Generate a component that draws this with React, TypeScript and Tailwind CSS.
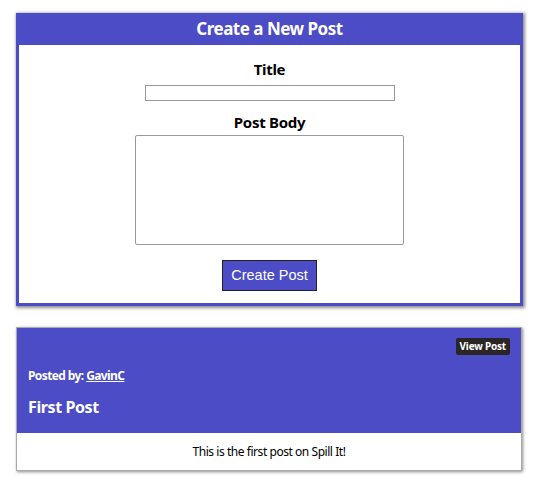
export default function App() {
  const font = { fontFamily: '"Noto Sans", "Open Sans", sans-serif' }
  return (
    <div className="min-h-[479px] bg-white pt-[13px] pl-4" style={font}>
      {/* New post form */}
      <div className="w-[507px] border-[3px] border-[#4b4cc6] bg-white shadow-[1px_1px_3px_1px_rgba(0,0,0,0.45)]">
        <div className="flex h-[29px] items-start justify-center bg-[#4b4cc6]">
          <h2 className="text-[17px] font-bold leading-[26px] tracking-[-0.5px] text-white">
            Create a New Post
          </h2>
        </div>
        <form className="flex flex-col items-center pb-[12px] pt-[14px]">
          <label className="text-[15px] font-bold leading-[20px] tracking-[-0.3px] text-black">Title</label>
          <input
            type="text"
            className="mt-[6px] h-[16px] w-[250px] border border-[#999] outline-none"
          />
          <label className="mt-[11px] text-[15px] font-bold leading-[20px] tracking-[-0.3px] text-black">
            Post Body
          </label>
          <textarea className="mt-[3px] h-[110px] w-[269px] resize-none rounded-[2px] border border-[#999] outline-none" />
          <button
            type="button"
            className="mt-[15px] h-[31px] w-[95px] border border-[#222] bg-[#4b4cc6] text-[14.5px] text-white"
            style={{ fontFamily: '"Liberation Sans", Arial, sans-serif' }}
          >
            Create Post
          </button>
        </form>
      </div>

      {/* Post card */}
      <div className="mt-[21px] w-[506px] border border-[#aaa] shadow-[1px_1px_3px_rgba(0,0,0,0.45)]">
        <div className="flex h-[105px] flex-col bg-[#4b4cc6] px-[11px] pt-[10px] text-white">
          <div className="flex justify-end">
            <button
              type="button"
              className="h-[17px] rounded-[2px] bg-[#2b2525] px-[4px] text-[10px] font-bold leading-[17px] tracking-[-0.2px] text-white"
            >
              View Post
            </button>
          </div>
          <p className="mt-[13px] text-[12px] font-bold leading-[16px] tracking-[-0.6px]">
            Posted by: <a className="underline" href="#">GavinC</a>
          </p>
          <h3 className="mt-[12px] text-[16px] font-bold leading-[22px] tracking-[-0.4px]">First Post</h3>
        </div>
        <div className="flex h-[37px] items-center justify-center bg-white pt-[1px]">
          <p className="text-[12px] tracking-[-0.45px] text-black">This is the first post on Spill It!</p>
        </div>
      </div>
    </div>
  )
}
